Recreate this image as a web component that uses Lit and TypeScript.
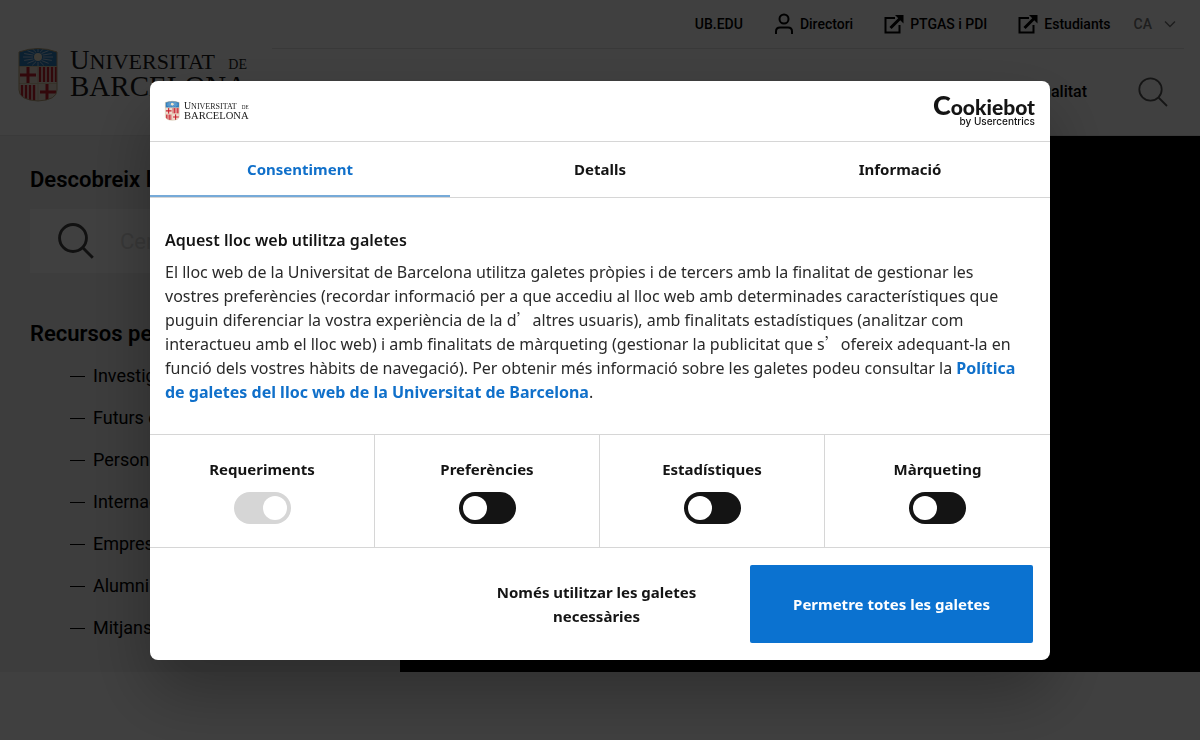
import { LitElement, html, css, svg } from "lit";
import { customElement, state } from "lit/decorators.js";
import { classMap } from "lit/directives/class-map.js";

@customElement("ub-logo")
class UbLogo extends LitElement {
  static styles = css`
    :host { display: block; }
    svg { display: block; width: 100%; height: auto; overflow: visible; }
    .word { font-family: "Liberation Serif", serif; fill: #1a1a1a; }
    .cap { font-size: 27px; }
    .small { font-size: 22px; }
    .tiny { font-size: 14px; }
    .big { font-size: 29px; }
  `;
  render() {
    const rays = Array.from({ length: 16 }, (_, i) => {
      const a = (i * Math.PI) / 8;
      return svg`<line x1=${20 + 5 * Math.cos(a)} y1=${9 + 5 * Math.sin(a)}
        x2=${20 + 15 * Math.cos(a)} y2=${9 + 9 * Math.sin(a)} stroke="#cfe0ee" stroke-width=".8"/>`;
    });
    return html`
      <svg viewBox="0 0 230 54" role="img" aria-label="Universitat de Barcelona">
        <defs>
          <clipPath id="shield"><path d="M1 4Q20-3 39 4V42Q39 52 20 53Q1 52 1 42Z" /></clipPath>
        </defs>
        <g clip-path="url(#shield)">
          <rect width="40" height="54" fill="#f0ddd0" />
          <rect width="40" height="18" fill="#2f7fc0" />
          ${rays}
          <circle cx="20" cy="9" r="4" fill="#efe6cf" />
          <path d="M2 27H18M10 19V35M22 44H38M29 36V53" stroke="#c8202f" stroke-width="3" />
          <path d="M22 19V34M26 19V34M30 19V34M34 19V34M38 19V34M4 37V52M8 37V52M12 37V52M16 37V52"
            stroke="#c8202f" stroke-width="2.400" />
          <path d="M0 18.500H40M0 35.500H40M20 18V54" stroke="#d8c9a8" stroke-width="1" />
        </g>
        <path d="M1 4Q20-3 39 4V42Q39 52 20 53Q1 52 1 42Z" fill="none" stroke="#b9a27a" stroke-width="1" />
        <text class="word" x="52" y="21"><tspan class="cap">U</tspan><tspan class="small">NIVERSITAT</tspan></text>
        <text class="word tiny" x="229" y="21" text-anchor="end">DE</text>
        <text class="word big" x="52" y="48">BARCELONA</text>
      </svg>
    `;
  }
}

const searchIcon = (w: number) => html`
  <svg viewBox="0 0 30 30" fill="none" stroke="currentColor" stroke-width=${w} aria-hidden="true">
    <circle cx="12.500" cy="12.500" r="11.200" /><path d="M20.500 20.500L29 29" />
  </svg>`;
const userIcon = html`
  <svg class="ico" viewBox="0 0 20 22" fill="none" stroke="currentColor" stroke-width="2" aria-hidden="true">
    <circle cx="10" cy="6" r="4.500" /><path d="M2 21V18.500Q2 14.500 6 14.500H14Q18 14.500 18 18.500V21" />
  </svg>`;
const outIcon = html`
  <svg class="ico" viewBox="0 0 20 22" fill="none" stroke="currentColor" stroke-width="2" aria-hidden="true">
    <path d="M11 5H1.500V19.500H15.500V12" /><path d="M6.500 15L16 5.500" stroke-width="3" />
    <path d="M11 2H19.500V10.500Z" fill="currentColor" stroke="none" />
  </svg>`;

@customElement("site-page")
class SitePage extends LitElement {
  static styles = css`
    :host { display: block; font-family: Roboto, sans-serif; color: #000; background: #fff; min-height: 100vh; }
    a { color: inherit; text-decoration: none; }
    header {
      display: grid; grid-template-columns: 230px 1fr; gap: 24px; height: 136px;
      box-sizing: border-box; padding: 0 16px 0 18px; border-bottom: 1px solid #e8e8e8;
    }
    ub-logo { margin-top: 48px; }
    .top {
      display: flex; justify-content: flex-end; align-items: center; gap: 31px; height: 48px;
      border-bottom: 1px solid #e4e4e4; font-size: 14px; font-weight: 500; padding-right: 8px;
    }
    .top a { display: flex; align-items: center; gap: 6px; }
    .ico { width: 20px; height: 22px; }
    .lang {
      display: flex; align-items: center; gap: 12px; color: #777; padding: 0; border: 0;
      background: none; font: inherit; margin-left: -8px;
    }
    .lang svg { width: 12px; height: 8px; }
    .main { display: flex; justify-content: flex-end; align-items: center; height: 85px; gap: 51px; padding-right: 16px; font-size: 16px; font-weight: 500; }
    .main button { width: 30px; height: 30px; padding: 0; border: 0; background: none; color: #555; }
    .main svg { display: block; }
    .hero { display: grid; grid-template-columns: minmax(0, 1fr) minmax(0, 2fr); min-height: 536px; }
    aside { background: #f1f1f1; padding: 31px 30px 20px; box-sizing: border-box; }
    .film { background: #000; }
    h2 { margin: 0; font-size: 22px; line-height: 26px; font-weight: 600; }
    .search { display: flex; align-items: center; gap: 26px; height: 64px; margin: 16px 0 48px; padding-left: 28px; background: #fff; color: #444; }
    .search svg { width: 36px; height: 36px; flex: none; }
    .search input { min-width: 0; flex: 1; border: 0; font: 22px Roboto, sans-serif; background: none; padding: 0; }
    .search input::placeholder { color: #ddd; }
    ul { list-style: none; margin: 8px 0 0; padding: 0 0 0 40px; font-size: 18px; line-height: 42px; }
    li a { display: flex; align-items: center; gap: 8px; }
    li a::before { content: ""; width: 15px; height: 1px; background: #000; }
  `;
  private links = ["Investigadors", "Futurs estudiants", "Personal", "Internacional", "Empreses", "Alumni", "Mitjans"];
  render() {
    return html`
      <header>
        <ub-logo></ub-logo>
        <div>
          <nav class="top">
            <a href="#">UB.EDU</a>
            <a href="#">${userIcon}Directori</a>
            <a href="#">${outIcon}PTGAS i PDI</a>
            <a href="#">${outIcon}Estudiants</a>
            <button class="lang">CA
              <svg viewBox="0 0 12 8" fill="none" stroke="currentColor" stroke-width="1.500"><path d="M1 1.500L6 6.500L11 1.500" /></svg>
            </button>
          </nav>
          <nav class="main">
            <a href="#">Actualitat</a>
            <button aria-label="Cerca">${searchIcon(1.8)}</button>
          </nav>
        </div>
      </header>
      <div class="hero">
        <aside>
          <h2>Descobreix la UB</h2>
          <label class="search">${searchIcon(2.4)}<input placeholder="Cercar" aria-label="Cercar" /></label>
          <h2>Recursos per a</h2>
          <ul>${this.links.map((l) => html`<li><a href="#">${l}</a></li>`)}</ul>
        </aside>
        <div class="film"></div>
      </div>
    `;
  }
}

@customElement("cookie-consent")
class CookieConsent extends LitElement {
  static styles = css`
    :host {
      position: fixed; inset: 0; display: grid; place-items: center; background: rgba(0, 0, 0, 0.75);
      font-family: "Noto Sans", sans-serif; color: #141414; font-size: 15px; line-height: 24px;
    }
    .dialog {
      width: 75%; min-width: 700px; background: #fff; border-radius: 8px; overflow: hidden;
      box-shadow: 0 32px 68px rgba(0, 0, 0, 0.3);
    }
    .head { display: flex; align-items: center; justify-content: space-between; height: 60px; padding: 0 15px; border-bottom: 1px solid #d6d6d6; }
    ub-logo { width: 84px; }
    .brand { display: flex; flex-direction: column; align-items: flex-end; color: #141414; text-decoration: none; }
    .name { font: 900 21px/18px Lato, sans-serif; }
    .name span { font-size: 27px; }
    .by { font: 500 10px/10px Inter, sans-serif; }
    .tabs { display: grid; grid-template-columns: repeat(3, 1fr); border-bottom: 1px solid #d6d6d6; }
    .tab { height: 55px; padding: 2px 0 0; border: 0; border-bottom: 2px solid transparent; background: none; font: inherit; font-weight: 700; color: inherit; }
    .tab.on { color: #1070ca; border-bottom-color: #76aad8; }
    .body { padding: 30px 22px 30px 15px; }
    h2 { margin: 0 0 8px; font-size: 16px; line-height: 24px; font-weight: 600; }
    p { margin: 0; color: #2a2a2a; font-size: 16px; }
    p a { color: #1070ca; font-weight: 700; text-decoration: none; }
    .q { font-family: "Noto Sans CJK SC", sans-serif; font-weight: 300; line-height: 1; }
    .kinds { display: grid; grid-template-columns: repeat(4, 1fr); border: solid #d6d6d6; border-width: 1px 0; }
    .kind { display: flex; flex-direction: column; align-items: center; gap: 11px; padding: 22px 0 23px; font-weight: 700; border-right: 1px solid #d6d6d6; }
    .kind:last-child { border-right: 0; }
    .kind input { appearance: none; display: block; margin: 0; width: 57px; height: 32px; border-radius: 16px; background: #141414; padding: 4px; box-sizing: border-box; }
    .kind input::before { content: ""; display: block; width: 24px; height: 24px; border-radius: 50%; background: #fff; }
    .kind input:checked::before { margin-left: auto; }
    .kind input:disabled { background: #d6d6d6; }
    .foot { display: flex; justify-content: flex-end; gap: 12px; padding: 17px; }
    .foot button { width: 283px; height: 78px; padding: 0 32px; border: 0; border-radius: 2px; background: none; color: inherit; font: inherit; font-weight: 700; }
    .foot .all { background: #0b72d0; color: #fff; }
  `;
  @state() private tab = 0;
  private kinds = ["Requeriments", "Preferències", "Estadístiques", "Màrqueting"];
  render() {
    const q = html`<span class="q" lang="zh-CN">’</span>`;
    return html`
      <section class="dialog" role="dialog" aria-label="Galetes">
        <div class="head">
          <ub-logo></ub-logo>
          <a class="brand" href="#"><span class="name"><span>C</span>ookiebot</span><span class="by">by Usercentrics</span></a>
        </div>
        <div class="tabs" role="tablist">
          ${["Consentiment", "Detalls", "Informació"].map((t, i) => html`
            <button role="tab" class=${classMap({ tab: true, on: i === this.tab })} @click=${() => (this.tab = i)}>${t}</button>`)}
        </div>
        <div class="body">
          <h2>Aquest lloc web utilitza galetes</h2>
          <p>El lloc web de la Universitat de Barcelona utilitza galetes pròpies i de tercers amb la finalitat de gestionar les vostres preferències (recordar informació per a que accediu al lloc web amb determinades característiques que puguin diferenciar la vostra experiència de la d${q}altres usuaris), amb finalitats estadístiques (analitzar com interactueu amb el lloc web) i amb finalitats de màrqueting (gestionar la publicitat que s${q}ofereix adequant-la en funció dels vostres hàbits de navegació). Per obtenir més informació sobre les galetes podeu consultar la <a href="#">Política de galetes del lloc web de la Universitat de Barcelona</a>.</p>
        </div>
        <div class="kinds">
          ${this.kinds.map((k, i) => html`
            <label class="kind">${k}<input type="checkbox" ?checked=${i === 0} ?disabled=${i === 0} /></label>`)}
        </div>
        <div class="foot">
          <button>Només utilitzar les galetes necessàries</button>
          <button class="all">Permetre totes les galetes</button>
        </div>
      </section>
    `;
  }
}

@customElement("app-root")
class AppRoot extends LitElement {
  static styles = css`:host { display: block; }`;
  render() {
    return html`<site-page></site-page><cookie-consent></cookie-consent>`;
  }
}
